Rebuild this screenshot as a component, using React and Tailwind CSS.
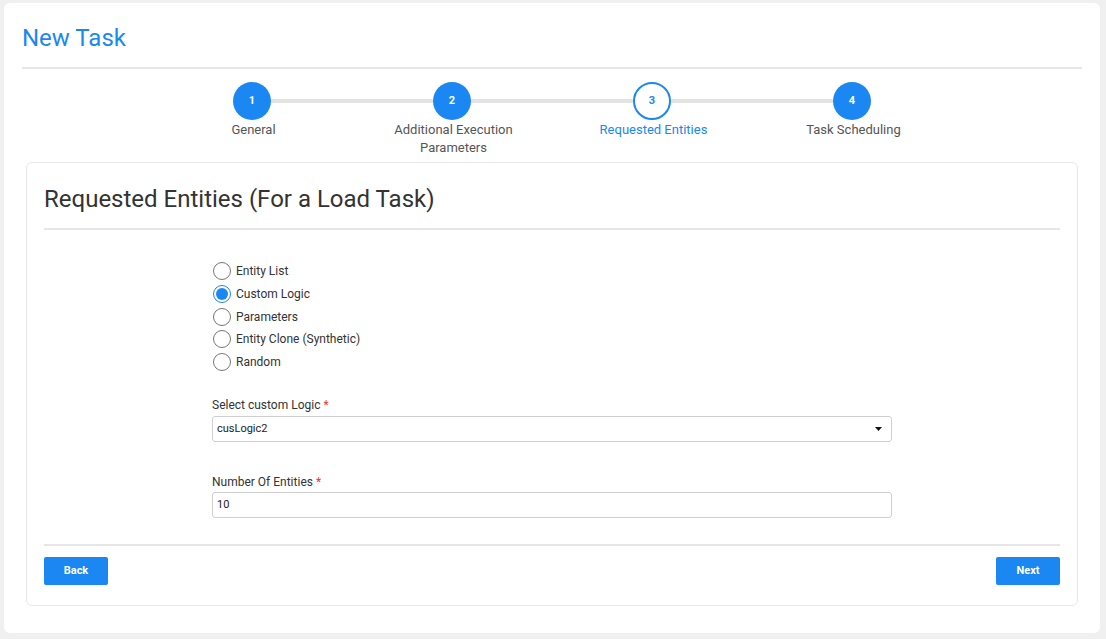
import React, { useState } from 'react';

const steps = [
  { n: 1, label: ['General'], state: 'done' },
  { n: 2, label: ['Additional Execution', 'Parameters'], state: 'done' },
  { n: 3, label: ['Requested Entities'], state: 'active' },
  { n: 4, label: ['Task Scheduling'], state: 'done' },
];

const options = ['Entity List', 'Custom Logic', 'Parameters', 'Entity Clone (Synthetic)', 'Random'];

const Stepper = () => (
  <div className="flex justify-center mt-[13px]">
    {steps.map((step, i) => (
      <div key={step.n} className="w-[200px] flex flex-col items-center">
        <div className="flex items-center w-full">
          <div className={`flex-1 h-[4px] ${i === 0 ? 'bg-transparent' : 'bg-[#e3e3e3]'}`} />
          {step.state === 'active' ? (
            <div className="w-[38px] h-[38px] rounded-full border-2 border-[#1a87f2] bg-white flex items-center justify-center text-[11px] font-bold text-[#1a87f2]">
              {step.n}
            </div>
          ) : (
            <div className="w-[38px] h-[38px] rounded-full bg-[#1a87f2] flex items-center justify-center text-[11px] font-bold text-white">
              {step.n}
            </div>
          )}
          <div className={`flex-1 h-[4px] ${i === steps.length - 1 ? 'bg-transparent' : 'bg-[#e3e3e3]'}`} />
        </div>
        <div className={`pt-[1px] pl-[3px] text-[13px] leading-[18px] text-center ${step.state === 'active' ? 'text-[#1a87f2]' : 'text-[#555]'}`}>
          {step.label.map(l => <div key={l}>{l}</div>)}
        </div>
      </div>
    ))}
  </div>
);

const App = () => {
  const [selected, setSelected] = useState('Custom Logic');
  const [count, setCount] = useState('10');

  return (
    <div className="min-h-[639px] bg-[#f0f0f0] pt-[3px] pl-[4px] pr-[6px] pb-[6px] font-['Roboto',sans-serif]">
      <div className="bg-white rounded-[6px] h-[630px] px-[18px] pt-[19px]">
        <h1 className="text-[24px] leading-[32px] text-[#1a87f2]">New Task</h1>
        <div className="h-[2px] bg-[#e6e6e6] mt-[13px]" />

        <Stepper />

        {/* Requested entities card */}
        <div className="mx-[4px] mt-[5px] border border-[#e8e8e8] rounded-[6px] px-[17px] pt-[20px] pb-[20px]">
          <h2 className="text-[24px] leading-[32px] text-[#333]">Requested Entities (For a Load Task)</h2>
          <div className="h-[2px] bg-[#e6e6e6] mt-[13px]" />

          <div className="pl-[168px] w-[848px]">
            <div className="mt-[30px]">
              {options.map(opt => (
                <label key={opt} className="flex items-center h-[22.7px] cursor-pointer">
                  <span
                    onClick={() => setSelected(opt)}
                    className={`w-[18px] h-[18px] rounded-full border flex items-center justify-center ml-[1px] ${selected === opt ? 'border-[#1a87f2]' : 'border-[#767676]'}`}
                  >
                    {selected === opt && <span className="w-[12px] h-[12px] rounded-full bg-[#1a87f2]" />}
                  </span>
                  <span className="ml-[5px] text-[12px] text-[#333]">{opt}</span>
                </label>
              ))}
            </div>

            <div className="mt-[24px]">
              <div className="text-[12px] leading-[16px] text-[#333] mb-[3px]">
                Select custom Logic <span className="text-[#e53935]">*</span>
              </div>
              <div className="h-[26px] border border-[#cfcfcf] rounded-[3px] flex items-center justify-between px-[4px]">
                <span className="text-[11px] text-[#222]">cusLogic2</span>
                <svg width="7" height="4" viewBox="0 0 7 4" className="mr-[5px]">
                  <path d="M0 0 L7 0 L3.5 4 Z" fill="#111" />
                </svg>
              </div>
            </div>

            <div className="mt-[32px]">
              <div className="text-[12px] leading-[16px] text-[#333] mb-[1px]">
                Number Of Entities <span className="text-[#e53935]">*</span>
              </div>
              <input
                value={count}
                onChange={e => setCount(e.target.value)}
                className="w-full h-[26px] border border-[#cfcfcf] rounded-[3px] px-[4px] text-[11px] text-[#222] outline-none"
              />
            </div>
          </div>

          <div className="h-[2px] bg-[#e6e6e6] mt-[26px]" />
          <div className="flex justify-between mt-[11px]">
            <button className="w-[64px] h-[28px] bg-[#1a87f2] text-white text-[11px] font-bold rounded-[2px]">Back</button>
            <button className="w-[64px] h-[28px] bg-[#1a87f2] text-white text-[11px] font-bold rounded-[2px]">Next</button>
          </div>
        </div>
      </div>
    </div>
  );
};

export default App;
